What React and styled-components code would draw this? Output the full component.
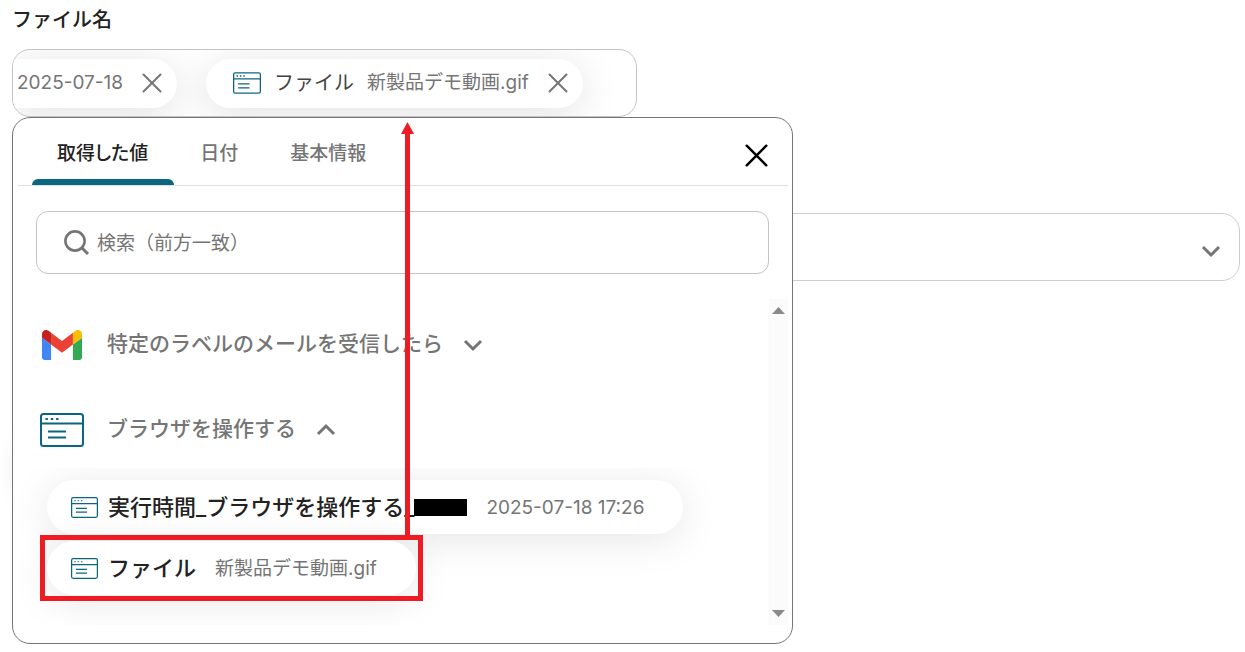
import React, { useState } from "react";
import styled, { createGlobalStyle } from "styled-components";

const GlobalStyle = createGlobalStyle`
  * {
    box-sizing: border-box;
  }
  body {
    margin: 0;
    background: #fff;
    color: #222;
    font-family: Inter, "Noto Sans CJK JP", sans-serif;
  }
  button,
  input,
  select {
    font: inherit;
    color: inherit;
  }
  button {
    padding: 0;
    border: 0;
    background: none;
    cursor: pointer;
  }
`;

const Page = styled.main`
  min-height: 100vh;
  padding: 5px 5px 8px 12px;
  background: radial-gradient(
    ellipse 14px 44px at 14px 470px,
    #f4f6f5,
    #fff
  );
`;

const FieldLabel = styled.label`
  display: block;
  height: 44px;
  font-size: 20px;
  line-height: 30px;
  font-weight: 500;
`;

const FieldContainer = styled.div`
  position: relative;
`;

const TokenField = styled.div`
  display: flex;
  align-items: center;
  gap: 29px;
  max-width: 625px;
  height: 68px;
  border: 1px solid #c4c4c4;
  border-radius: 18px;
  overflow: hidden;
`;

const Token = styled.div`
  display: flex;
  flex-shrink: 0;
  align-items: center;
  height: 49px;
  padding: ${(props) => (props.$cut ? "0 15px 0 4px" : "0 15px 0 27px")};
  border-radius: ${(props) => (props.$cut ? "0 25px 25px 0" : "25px")};
  background: #fff;
  box-shadow: 0 6px 40px rgba(0, 0, 0, 0.12);
`;

const TokenName = styled.span`
  margin: 0 13px;
  font-size: 20px;
  line-height: 30px;
  color: #444;
`;

const TokenValue = styled.span`
  margin-right: 19px;
  font-size: 19px;
  line-height: 28px;
  color: #757575;
`;

const TokenInput = styled.input`
  flex: 1;
  min-width: 0;
  height: 40px;
  border: 0;
  outline: 0;
  background: none;
`;

const IconButton = styled.button`
  display: flex;
  color: ${(props) => props.$color};
`;

const Panel = styled.section`
  position: absolute;
  top: 68px;
  left: 0;
  z-index: 1;
  width: 100%;
  max-width: 781px;
  padding: 0 4px 18px 5px;
  border: 1px solid #757575;
  border-radius: 18px;
  background: #fff;
`;

const PanelHeader = styled.div`
  display: flex;
  align-items: center;
  justify-content: space-between;
  height: 68px;
  padding: 7px 20px 0 14px;
  border-bottom: 1px solid #e0e0e0;
`;

const TabList = styled.div`
  display: flex;
  align-self: stretch;
  gap: 1px;
  font-feature-settings: "palt";
`;

const Tab = styled.button`
  position: relative;
  padding: 0 26px 2px 25px;
  font-size: 19px;
  line-height: 28px;
  font-weight: 500;
  color: ${(props) => (props.$active ? "#222" : "#757575")};

  &::after {
    content: "";
    display: ${(props) => (props.$active ? "block" : "none")};
    position: absolute;
    right: 0;
    bottom: 0;
    left: 0;
    height: 6px;
    border-radius: 6px 6px 0 0;
    background: #0b6680;
  }
`;

const SearchBox = styled.label`
  display: flex;
  align-items: center;
  gap: 7px;
  height: 63px;
  margin: 25px 19px 25px 18px;
  padding: 0 26px;
  border: 1px solid #c4c4c4;
  border-radius: 12px;
  color: #757575;
`;

const SearchInput = styled.input`
  flex: 1;
  min-width: 0;
  padding: 2px 0 0;
  border: 0;
  outline: 0;
  background: none;
  font-size: 19px;
  line-height: 28px;

  &::placeholder {
    color: #757575;
    opacity: 1;
  }
`;

const ScrollArea = styled.div`
  display: flex;
`;

const GroupList = styled.div`
  flex: 1;
  min-width: 0;
  padding-top: 12px;
  overflow: hidden;
`;

const GroupHeader = styled.button`
  display: flex;
  align-items: center;
  height: 68px;
  margin-bottom: ${(props) => (props.$open ? "4px" : "17px")};
  padding-left: 22px;
  font-size: 21px;
  line-height: 32px;
  font-weight: 500;
  color: #757575;
`;

const GroupIcon = styled.span`
  display: flex;
  justify-content: center;
  width: 44px;
  margin-right: 23px;
`;

const GroupTitle = styled.span`
  margin-right: 20px;
  padding-bottom: 2px;
`;

const ItemList = styled.div`
  display: flex;
  flex-direction: column;
  align-items: flex-start;
  gap: 7px;
  padding: 12px 0 30px 29px;
  overflow: hidden;
`;

const ItemWrapper = styled.div`
  position: relative;
`;

const Item = styled.button`
  display: flex;
  align-items: center;
  height: 54px;
  padding: 0 39px 0 24px;
  border-radius: 27px;
  background: #fff;
  box-shadow: 0 6px 40px rgba(0, 0, 0, 0.1);
`;

const ItemName = styled.span`
  display: flex;
  align-items: center;
  margin: 0 19px 0 10px;
  font-size: 22px;
  line-height: 32px;
  font-weight: 500;
`;

const ItemValue = styled.span`
  padding-top: 2px;
  font-size: 19px;
  line-height: 28px;
  color: #757575;
`;

const Redacted = styled.span`
  width: 53px;
  height: 17px;
  background: #000;
`;

const Highlight = styled.div`
  position: absolute;
  inset: -6px -7px;
  border: 5px solid #ed1c24;
  pointer-events: none;
`;

const Arrow = styled.div`
  position: absolute;
  top: 4px;
  bottom: 107px;
  left: 388px;
  display: flex;
  flex-direction: column;
  align-items: center;
  width: 13px;
  pointer-events: none;

  &::before {
    content: "";
    width: 13px;
    height: 12px;
    background: #ed1c24;
    clip-path: polygon(50% 0, 100% 100%, 0 100%);
  }
  &::after {
    content: "";
    flex: 1;
    width: 5px;
    background: #ed1c24;
  }
`;

const ScrollBar = styled.div`
  display: flex;
  flex-direction: column;
  justify-content: space-between;
  align-items: center;
  width: 19px;
  padding: 8px 0;
  background: #fbfbfb;
`;

const SelectBox = styled.div`
  display: flex;
  align-items: center;
  height: 68px;
  margin-top: 96px;
  padding: 7px 18px 0 0;
  border: 1px solid #c9ced6;
  border-radius: 18px;
  color: #757575;
`;

const Select = styled.select`
  flex: 1;
  height: 100%;
  border: 0;
  outline: 0;
  appearance: none;
  background: none;
`;

function CloseIcon({ size, stroke }) {
  return (
    <svg width={size} height={size} viewBox="0 0 20 20" fill="none">
      <path
        d="M1.5 1.5l17 17M18.5 1.5l-17 17"
        stroke="currentColor"
        strokeWidth={stroke}
        strokeLinecap="round"
      />
    </svg>
  );
}

function ChevronIcon({ up }) {
  return (
    <svg width="20" height="14" viewBox="0 0 20 14" fill="none">
      <path
        d={up ? "M2 11l8-8 8 8" : "M2 3l8 8 8-8"}
        stroke="currentColor"
        strokeWidth="3"
      />
    </svg>
  );
}

function BrowserIcon({ width, height }) {
  return (
    <svg
      width={width}
      height={height}
      viewBox="0 0 44 34"
      fill="none"
      stroke="#0b6680"
      strokeWidth="2"
    >
      <rect x="1" y="1" width="42" height="32" rx="2.5" />
      <path d="M1 10.5h42M8 18.5h18M8 24.5h18" />
      <path d="M5.5 6h2.4M10.8 6h2.4M16.1 6h2.4" />
    </svg>
  );
}

function SearchIcon() {
  return (
    <svg width="27" height="27" viewBox="0 0 27 27" fill="none">
      <circle cx="12" cy="12" r="9.6" stroke="currentColor" strokeWidth="2.6" />
      <path d="M18.5 18.5l6.5 6.5" stroke="currentColor" strokeWidth="3" />
    </svg>
  );
}

function GmailIcon() {
  return (
    <svg width="40" height="30" viewBox="52 42 88 66">
      <path fill="#4285f4" d="M58 108h14V74L52 59v43c0 3.32 2.69 6 6 6" />
      <path fill="#34a853" d="M120 108h14c3.32 0 6-2.69 6-6V59l-20 15" />
      <path fill="#fbbc04" d="M120 48v26l20-15v-8c0-7.42-8.47-11.65-14.4-7.2" />
      <path fill="#ea4335" d="M72 74V48l24 18 24-18v26L96 92" />
      <path
        fill="#c5221f"
        d="M52 51v8l20 15V48l-5.6-4.2c-5.94-4.45-14.4-.22-14.4 7.2"
      />
    </svg>
  );
}

function ScrollArrow({ down }) {
  return (
    <svg width="13" height="7" viewBox="0 0 13 7">
      <path d={down ? "M0 0h13L6.5 7z" : "M0 7h13L6.5 0z"} fill="#8a8a8a" />
    </svg>
  );
}

const tabs = ["取得した値", "日付", "基本情報"];

export default function App() {
  const [activeTab, setActiveTab] = useState(0);
  const [keyword, setKeyword] = useState("");

  return (
    <>
      <GlobalStyle />
      <Page>
        <FieldLabel htmlFor="fileName">ファイル名</FieldLabel>
        <FieldContainer>
          <TokenField>
            <Token $cut>
              <TokenValue>2025-07-18</TokenValue>
              <IconButton $color="#757575" aria-label="削除">
                <CloseIcon size="20" stroke="2" />
              </IconButton>
            </Token>
            <Token>
              <BrowserIcon width="28" height="22" />
              <TokenName>ファイル</TokenName>
              <TokenValue>新製品デモ動画.gif</TokenValue>
              <IconButton $color="#757575" aria-label="削除">
                <CloseIcon size="20" stroke="2" />
              </IconButton>
            </Token>
            <TokenInput id="fileName" type="text" />
          </TokenField>

          <Panel>
            <PanelHeader>
              <TabList role="tablist">
                {tabs.map((tab, index) => (
                  <Tab
                    key={tab}
                    role="tab"
                    aria-selected={index === activeTab}
                    $active={index === activeTab}
                    onClick={() => setActiveTab(index)}
                  >
                    {tab}
                  </Tab>
                ))}
              </TabList>
              <IconButton $color="#000" aria-label="閉じる">
                <CloseIcon size="23" stroke="2.2" />
              </IconButton>
            </PanelHeader>

            <SearchBox>
              <SearchIcon />
              <SearchInput
                type="text"
                aria-label="検索"
                placeholder="検索（前方一致）"
                value={keyword}
                onChange={(e) => setKeyword(e.target.value)}
              />
            </SearchBox>

            <ScrollArea>
              <GroupList>
                <GroupHeader aria-expanded="false">
                  <GroupIcon>
                    <GmailIcon />
                  </GroupIcon>
                  <GroupTitle>特定のラベルのメールを受信したら</GroupTitle>
                  <ChevronIcon />
                </GroupHeader>
                <GroupHeader $open aria-expanded="true">
                  <GroupIcon>
                    <BrowserIcon width="44" height="34" />
                  </GroupIcon>
                  <GroupTitle>ブラウザを操作する</GroupTitle>
                  <ChevronIcon up />
                </GroupHeader>
                <ItemList>
                  <Item>
                    <BrowserIcon width="27" height="21" />
                    <ItemName>
                      実行時間_ブラウザを操作する_
                      <Redacted />
                    </ItemName>
                    <ItemValue>2025-07-18 17:26</ItemValue>
                  </Item>
                  <ItemWrapper>
                    <Item>
                      <BrowserIcon width="27" height="21" />
                      <ItemName>ファイル</ItemName>
                      <ItemValue>新製品デモ動画.gif</ItemValue>
                    </Item>
                    <Highlight />
                  </ItemWrapper>
                </ItemList>
              </GroupList>
              <ScrollBar>
                <ScrollArrow />
                <ScrollArrow down />
              </ScrollBar>
            </ScrollArea>
            <Arrow />
          </Panel>
        </FieldContainer>

        <SelectBox>
          <Select aria-label="選択">
            <option value=""></option>
          </Select>
          <ChevronIcon />
        </SelectBox>
      </Page>
    </>
  );
}
